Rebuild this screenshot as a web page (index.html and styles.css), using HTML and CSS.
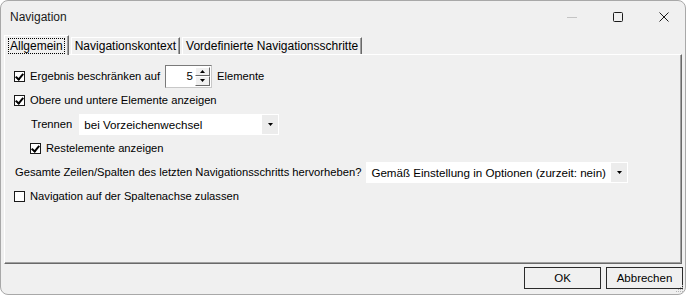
FILE: index.html
```html
<!DOCTYPE html>
<html lang="de">
<head>
    <meta charset="UTF-8">
    <title>Navigation</title>
    <link rel="stylesheet" href="styles.css">
</head>
<body>
    <div class="window">
        <div class="titlebar">
            <span class="title">Navigation</span>
            <div class="controls">
                <svg class="ctl" width="12" height="12" viewBox="0 0 12 12"><path d="M1 6.5h10" stroke="#c4c4c4" stroke-width="1"/></svg>
                <svg class="ctl" width="12" height="12" viewBox="0 0 12 12"><rect x="1.5" y="1.5" width="9" height="9" rx="1" fill="none" stroke="#1b1b1b" stroke-width="1"/></svg>
                <svg class="ctl" width="12" height="12" viewBox="0 0 12 12"><path d="M1.5 1.5l9 9M10.5 1.5l-9 9" stroke="#1b1b1b" stroke-width="1"/></svg>
            </div>
        </div>

        <div class="tabs">
            <div class="tab active"><span class="focus">Allgemein</span></div>
            <div class="tab">Navigationskontext</div>
            <div class="tab">Vordefinierte Navigationsschritte</div>
        </div>

        <div class="panel">
            <div class="row">
                <span class="check on"></span>
                <span class="label">Ergebnis beschränken auf</span>
                <div class="spin">
                    <span class="spin-value">5</span>
                    <div class="spin-buttons">
                        <span class="spin-btn"><svg width="5" height="3" viewBox="0 0 5 3"><path d="M2.5 0L5 3H0z" fill="#000"/></svg></span>
                        <span class="spin-btn"><svg width="5" height="3" viewBox="0 0 5 3"><path d="M0 0h5L2.5 3z" fill="#000"/></svg></span>
                    </div>
                </div>
                <span class="label">Elemente</span>
            </div>

            <div class="row">
                <span class="check on"></span>
                <span class="label">Obere und untere Elemente anzeigen</span>
            </div>

            <div class="row sub">
                <span class="label trennen">Trennen</span>
                <div class="combo combo-short">
                    <span class="combo-text">bei Vorzeichenwechsel</span>
                    <span class="combo-arrow"><svg width="5" height="3" viewBox="0 0 5 3"><path d="M0 0h5L2.5 3z" fill="#000"/></svg></span>
                </div>
            </div>

            <div class="row sub">
                <span class="check on"></span>
                <span class="label">Restelemente anzeigen</span>
            </div>

            <div class="row">
                <span class="label plain">Gesamte Zeilen/Spalten des letzten Navigationsschritts hervorheben?</span>
                <div class="combo combo-long">
                    <span class="combo-text">Gemäß Einstellung in Optionen (zurzeit: nein)</span>
                    <span class="combo-arrow"><svg width="5" height="3" viewBox="0 0 5 3"><path d="M0 0h5L2.5 3z" fill="#000"/></svg></span>
                </div>
            </div>

            <div class="row">
                <span class="check"></span>
                <span class="label">Navigation auf der Spaltenachse zulassen</span>
            </div>
        </div>

        <div class="footer">
            <button class="btn">OK</button>
            <button class="btn">Abbrechen</button>
            <svg class="grip" width="10" height="10" viewBox="0 0 10 10">
                <g fill="#b4b4b4">
                    <rect x="8" y="2" width="1" height="1"/>
                    <rect x="6" y="4" width="1" height="1"/><rect x="8" y="4" width="1" height="1"/>
                    <rect x="4" y="6" width="1" height="1"/><rect x="6" y="6" width="1" height="1"/><rect x="8" y="6" width="1" height="1"/>
                    <rect x="2" y="8" width="1" height="1"/><rect x="4" y="8" width="1" height="1"/><rect x="6" y="8" width="1" height="1"/><rect x="8" y="8" width="1" height="1"/>
                </g>
            </svg>
        </div>
    </div>
</body>
</html>
```

FILE: styles.css
```css
* {
    margin: 0;
    padding: 0;
    box-sizing: border-box;
}

body {
    width: 686px;
    height: 295px;
    background: #ffffff;
    font-family: "Liberation Sans", Arial, sans-serif;
    font-size: 11.2px;
    color: #000;
}

.window {
    width: 686px;
    height: 295px;
    background: #f0f0f0;
    border: 1px solid #a8a8a8;
    border-radius: 8px;
    display: flex;
    flex-direction: column;
    overflow: hidden;
    position: relative;
}

/* title bar */
.titlebar {
    height: 31px;
    display: flex;
    align-items: center;
    justify-content: space-between;
    padding-left: 9px;
}

.title {
    font-size: 12px;
    color: #1a1a1a;
}

.controls {
    display: flex;
    align-items: center;
    height: 100%;
}

.ctl {
    margin-left: 34px;
}

.controls .ctl:last-child {
    margin-right: 15px;
}

/* tabs */
.tabs {
    height: 22px;
    display: flex;
    align-items: flex-end;
    padding-left: 3px;
    font-size: 12px;
}

.tab {
    height: 17px;
    padding: 0 3px;
    display: flex;
    align-items: center;
    border-top: 1px solid #fff;
    border-left: 1px solid #fff;
    border-right: 1px solid #696969;
    box-shadow: inset -1px 0 0 #a0a0a0;
    color: #000;
    margin-left: 2px;
}

.tab.active {
    height: 20px;
    margin-left: 0;
    padding: 0 3px;
    position: relative;
    top: 1px;
    background: #f0f0f0;
    z-index: 1;
}

.focus {
    border: 1px dotted #000;
    padding: 0 1px;
    line-height: 14px;
}

/* tab page */
.panel {
    height: 210px;
    margin: 0 3px 0 3px;
    border-top: 1px solid #fff;
    border-left: 1px solid #fff;
    border-right: 1px solid #696969;
    border-bottom: 1px solid #696969;
    box-shadow: inset -1px -1px 0 #a0a0a0;
    padding: 9px 0 0 9px;
}

.row {
    height: 24px;
    display: flex;
    align-items: center;
}

.row.sub {
    padding-left: 16px;
}

.check {
    width: 11px;
    height: 11px;
    border: 1px solid #1a1a1a;
    background: #fff;
    margin-right: 5px;
    position: relative;
}

.check.on::after {
    content: "";
    position: absolute;
    left: 2px;
    top: 0px;
    width: 3px;
    height: 6px;
    border-right: 2px solid #000;
    border-bottom: 2px solid #000;
    transform: rotate(40deg);
}

.label {
    white-space: nowrap;
}

.label.plain {
    margin-left: 1px;
    margin-right: 5px;
}

.label.trennen {
    margin-left: 1px;
    margin-right: 7px;
}

/* spin box */
.spin {
    width: 47px;
    height: 23px;
    margin: 0 5px;
    background: #fff;
    border: 1px solid #7a7a7a;
    border-right-color: #c8c8c8;
    border-bottom-color: #c8c8c8;
    display: flex;
    align-items: stretch;
    padding: 1px;
}

.spin-value {
    flex: 1;
    display: flex;
    align-items: center;
    justify-content: flex-end;
    padding-right: 2px;
    font-size: 11.5px;
}

.spin-buttons {
    width: 15px;
    display: flex;
    flex-direction: column;
}

.spin-btn {
    flex: 1;
    background: #f0f0f0;
    border-top: 1px solid #fff;
    border-left: 1px solid #fff;
    border-right: 1px solid #696969;
    border-bottom: 1px solid #696969;
    display: flex;
    align-items: center;
    justify-content: center;
}

/* combo boxes */
.combo {
    height: 21px;
    background: #fff;
    padding: 1px;
    display: flex;
    align-items: stretch;
}

.combo-short {
    width: 200px;
}

.combo-long {
    width: 262px;
}

.combo-text {
    flex: 1;
    display: flex;
    align-items: center;
    padding-left: 4px;
    font-size: 11.6px;
    white-space: nowrap;
}

.combo-arrow {
    width: 16px;
    background: #ececec;
    display: flex;
    align-items: center;
    justify-content: center;
}

/* footer */
.footer {
    flex: 1;
    display: flex;
    justify-content: flex-end;
    align-items: flex-start;
    padding: 3px 2px 0 0;
    gap: 5px;
}

.btn {
    width: 77px;
    height: 22px;
    background: #f0f0f0;
    border: 1px solid #2a2a2a;
    font-family: inherit;
    font-size: 11.5px;
    color: #000;
}

.grip {
    position: absolute;
    right: 1px;
    bottom: 1px;
}
```
